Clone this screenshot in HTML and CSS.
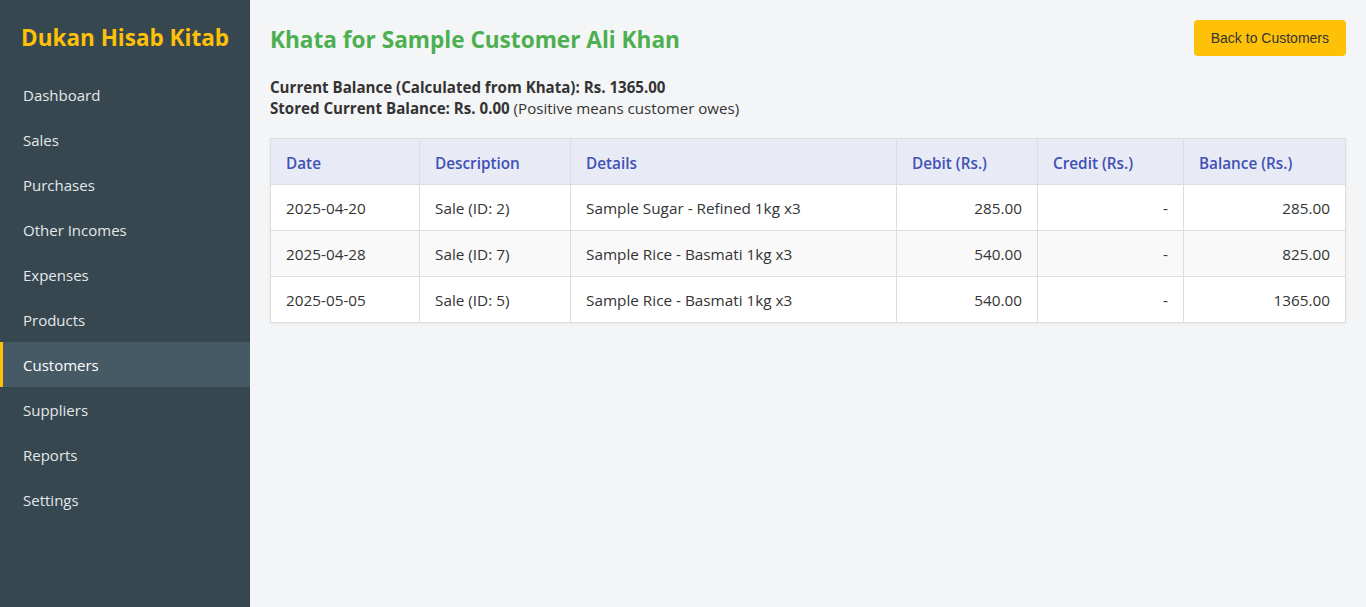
FILE: index.html
```html
<!DOCTYPE html>
<html lang="en">
<head>
<meta charset="utf-8">
<title>Khata - Dukan Hisab Kitab</title>
<link rel="stylesheet" href="styles.css">
</head>
<body>
<div class="app">
  <aside class="sidebar">
    <div class="brand">Dukan Hisab Kitab</div>
    <nav class="nav">
      <a class="nav-item" href="#">Dashboard</a>
      <a class="nav-item" href="#">Sales</a>
      <a class="nav-item" href="#">Purchases</a>
      <a class="nav-item" href="#">Other Incomes</a>
      <a class="nav-item" href="#">Expenses</a>
      <a class="nav-item" href="#">Products</a>
      <a class="nav-item active" href="#">Customers</a>
      <a class="nav-item" href="#">Suppliers</a>
      <a class="nav-item" href="#">Reports</a>
      <a class="nav-item" href="#">Settings</a>
    </nav>
  </aside>
  <main class="main">
    <div class="page-head">
      <h1 class="title">Khata for Sample Customer Ali Khan</h1>
      <button class="btn-back">Back to Customers</button>
    </div>
    <div class="summary">
      <div><strong>Current Balance (Calculated from Khata): Rs. 1365.00</strong></div>
      <div><strong>Stored Current Balance: Rs. 0.00</strong> (Positive means customer owes)</div>
    </div>
    <table class="ledger">
      <colgroup>
        <col class="c-date"><col class="c-desc"><col class="c-details"><col class="c-debit"><col class="c-credit"><col class="c-bal">
      </colgroup>
      <thead>
        <tr><th>Date</th><th>Description</th><th>Details</th><th>Debit (Rs.)</th><th>Credit (Rs.)</th><th>Balance (Rs.)</th></tr>
      </thead>
      <tbody>
        <tr><td>2025-04-20</td><td>Sale (ID: 2)</td><td>Sample Sugar - Refined 1kg x3</td><td class="num">285.00</td><td class="num">-</td><td class="num">285.00</td></tr>
        <tr><td>2025-04-28</td><td>Sale (ID: 7)</td><td>Sample Rice - Basmati 1kg x3</td><td class="num">540.00</td><td class="num">-</td><td class="num">825.00</td></tr>
        <tr><td>2025-05-05</td><td>Sale (ID: 5)</td><td>Sample Rice - Basmati 1kg x3</td><td class="num">540.00</td><td class="num">-</td><td class="num">1365.00</td></tr>
      </tbody>
    </table>
  </main>
</div>
</body>
</html>
```
FILE: styles.css
```css
* { box-sizing: border-box; }
html, body { margin: 0; padding: 0; height: 100%; }
body {
  font-family: "Open Sans", "Noto Sans", "DejaVu Sans", sans-serif;
  color: #333;
  background: #f4f5f7;
}
.app { display: flex; min-height: 100vh; }
.sidebar {
  width: 250px;
  flex: 0 0 250px;
  background: #37474f;
  color: #eceff1;
}
.brand {
  text-align: center;
  color: #ffc107;
  font-weight: 700;
  font-size: 22.5px;
  line-height: 32px;
  padding: 22px 0 18px;
}
.nav { display: flex; flex-direction: column; }
.nav-item {
  display: block;
  height: 45px;
  line-height: 44px;
  padding: 1px 20px 0;
  border-left: 3px solid transparent;
  color: #e3e7ea;
  text-decoration: none;
  font-size: 15px;
}
.nav-item.active {
  background: #455a64;
  border-left-color: #ffc107;
  color: #fff;
}
.main { flex: 1; padding: 20px; min-width: 0; }
.page-head {
  display: flex;
  justify-content: space-between;
  align-items: flex-start;
}
.title {
  margin: 4px 0 0;
  color: #4caf50;
  font-size: 22.6px;
  font-weight: 700;
  line-height: 32px;
}
.btn-back {
  background: #ffc107;
  border: none;
  border-radius: 4px;
  color: #333;
  font-family: "Liberation Sans", Arial, sans-serif;
  font-size: 14px;
  height: 36px;
  padding: 1px 17px 0;
  line-height: 35px;
  cursor: pointer;
}
.summary {
  margin-top: 21px;
  font-size: 15.1px;
  line-height: 21px;
}
.summary strong { font-weight: 700; }
.ledger {
  margin-top: 19px;
  width: 1075px;
  border-collapse: collapse;
  table-layout: fixed;
  background: #fff;
  font-size: 15.3px;
  box-shadow: 0 1px 3px rgba(0,0,0,0.06);
}
.c-date { width: 149px; }
.c-desc { width: 151px; }
.c-details { width: 326px; }
.c-debit { width: 141px; }
.c-credit { width: 146px; }
.c-bal { width: 162px; }
.ledger th, .ledger td {
  border: 1px solid #ddd;
  padding: 0 15px;
  height: 46px;
  text-align: left;
}
.ledger th {
  background: #e8eaf6;
  color: #3f51b5;
  font-weight: 600;
  padding-top: 2px;
}
.ledger td.num { text-align: right; }
.ledger tbody tr:nth-child(even) td { background: #f9f9f9; }
```
